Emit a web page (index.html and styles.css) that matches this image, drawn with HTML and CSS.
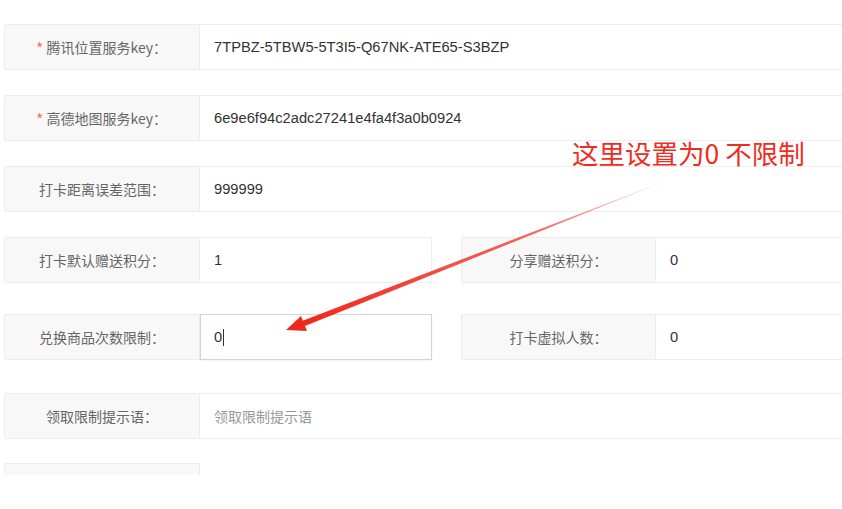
FILE: index.html
```html
<!DOCTYPE html>
<html lang="zh-CN">
  <head>
    <meta charset="UTF-8" />
    <meta name="viewport" content="width=device-width, initial-scale=1.0" />
    <title>打卡设置</title>
    <link rel="stylesheet" href="styles.css">
  </head>
  <body>
    <main class="page">
      <form class="form">
        <div class="item">
          <label class="label"><span class="req">*</span> 腾讯位置服务key：</label>
          <div class="value">7TPBZ-5TBW5-5T3I5-Q67NK-ATE65-S3BZP</div>
        </div>
        <div class="item">
          <label class="label"><span class="req">*</span> 高德地图服务key：</label>
          <div class="value">6e9e6f94c2adc27241e4fa4f3a0b0924</div>
        </div>
        <div class="item">
          <label class="label">打卡距离误差范围：</label>
          <div class="value">999999</div>
        </div>
        <div class="split split-a">
          <div class="item half">
            <label class="label">打卡默认赠送积分：</label>
            <div class="value">1</div>
          </div>
          <div class="item rest">
            <label class="label">分享赠送积分：</label>
            <div class="value">0</div>
          </div>
        </div>
        <div class="split split-b">
          <div class="item half">
            <label class="label">兑换商品次数限制：</label>
            <div class="value focus">0<span class="caret"></span></div>
          </div>
          <div class="item rest">
            <label class="label">打卡虚拟人数：</label>
            <div class="value">0</div>
          </div>
        </div>
        <div class="item item-c">
          <label class="label">领取限制提示语：</label>
          <div class="value placeholder">领取限制提示语</div>
        </div>
        <div class="item cut">
          <label class="label"></label>
        </div>
      </form>

      <div class="note">这里设置为0 不限制</div>
      <svg class="arrow" width="842" height="509" viewBox="0 0 842 509">
        <defs>
          <linearGradient id="fade" x1="673" y1="178" x2="300" y2="324" gradientUnits="userSpaceOnUse">
            <stop offset="0" stop-color="#f0281c" stop-opacity="0.05" />
            <stop offset="0.35" stop-color="#f0281c" stop-opacity="0.7" />
            <stop offset="1" stop-color="#f0281c" stop-opacity="1" />
          </linearGradient>
        </defs>
        <polygon points="673,178 305,326 302,321" fill="url(#fade)" />
        <polygon points="286,330 307,331 301,316" fill="#f0281c" />
      </svg>
    </main>
  </body>
</html>
```

FILE: styles.css
```css
* {
  box-sizing: border-box;
}
body {
  margin: 0;
  padding: 0;
  background-color: #fff;
  color: #333;
  font-family: "Liberation Sans", "Noto Sans CJK SC", sans-serif;
  font-size: 14px;
  overflow: hidden;
}
.page {
  position: relative;
  width: 842px;
  height: 509px;
  overflow: hidden;
}
.form {
  padding: 24px 0 0 4px;
  width: 880px;
}
.item {
  display: flex;
  height: 46px;
  margin-bottom: 25px;
}
.label {
  width: 196px;
  flex-shrink: 0;
  display: flex;
  align-items: center;
  justify-content: center;
  background-color: #f8f8f8;
  border: 1px solid #ececec;
  border-radius: 2px 0 0 2px;
  color: #666;
  font-family: "Noto Sans CJK SC", sans-serif;
  font-size: 14px;
}
.req {
  color: #ff5722;
  margin-right: 4px;
  font-family: "Liberation Sans", sans-serif;
}
.value {
  flex: 1;
  display: flex;
  align-items: center;
  padding-left: 14px;
  border: 1px solid #eeeeee;
  border-left: 0;
  background-color: #fff;
  color: #333;
  font-size: 14.7px;
}
.value.focus {
  border: 1px solid #d4d4d4;
  padding-left: 13px;
  box-shadow: 0 1px 2px rgba(0, 0, 0, 0.05);
}
.caret {
  display: inline-block;
  width: 1px;
  height: 17px;
  margin-left: 1px;
  background-color: #333;
}
.placeholder {
  color: #999;
  font-family: "Noto Sans CJK SC", sans-serif;
  font-size: 14px;
}
.split {
  display: flex;
  gap: 29px;
}
.split .item {
  margin-bottom: 0;
}
.split-a {
  margin-bottom: 31px;
}
.split-b {
  margin-bottom: 33px;
}
.half {
  width: 428px;
}
.half .value {
  border-right: 1px solid #eeeeee;
}
.half .value.focus {
  border: 1px solid #d4d4d4;
}
.rest {
  flex: 1;
}
.rest .label {
  width: 195px;
}
.item-c {
  margin-bottom: 24px;
}
.cut {
  height: 12px;
  margin-bottom: 0;
}
.cut .label {
  border-bottom: 0;
}
.note {
  position: absolute;
  left: 572px;
  top: 134px;
  color: #ee2d22;
  font-family: "Noto Sans CJK SC", sans-serif;
  font-size: 26.5px;
  line-height: 38px;
  white-space: nowrap;
}
.arrow {
  position: absolute;
  left: 0;
  top: 0;
  pointer-events: none;
}
```
